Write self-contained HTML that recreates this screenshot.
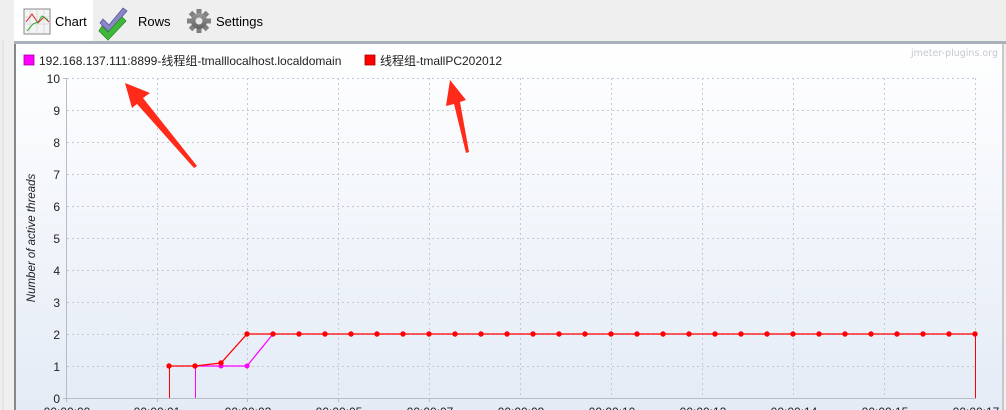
<!DOCTYPE html>
<html><head><meta charset="utf-8"><style>
html,body{margin:0;padding:0;width:1006px;height:410px;overflow:hidden;background:#efefef;font-family:"Liberation Sans","Noto Sans CJK SC",sans-serif;}
</style></head><body>
<svg width="1006" height="410" xmlns="http://www.w3.org/2000/svg" style="position:absolute;left:0;top:0" font-family="Liberation Sans, Noto Sans CJK SC, sans-serif">
<defs>
<linearGradient id="bg" x1="0" y1="0" x2="0" y2="1">
<stop offset="0" stop-color="#ffffff"/><stop offset="1" stop-color="#e4ebf6"/></linearGradient>
<linearGradient id="gr" x1="0" y1="0" x2="0" y2="1"><stop offset="0" stop-color="#9a9a9a"/><stop offset="1" stop-color="#606060"/></linearGradient>
</defs>
<rect x="0" y="0" width="1006" height="410" fill="#efefef"/>
<line x1="3" y1="40" x2="3" y2="410" stroke="#d8d8d8"/>
<rect x="14" y="0" width="79" height="41" fill="#ffffff"/>
<rect x="14" y="41" width="992" height="3" fill="#a9b1bb"/>
<rect x="24" y="9" width="26" height="25" fill="#f4f4f4" stroke="#888"/>
<g stroke="#ddd" stroke-width="1"><line x1="30" y1="10" x2="30" y2="33"/><line x1="37" y1="10" x2="37" y2="33"/><line x1="44" y1="10" x2="44" y2="33"/><line x1="25" y1="17" x2="49" y2="17"/><line x1="25" y1="24" x2="49" y2="24"/></g>
<polyline points="26,22 32,14 38,23 44,17 49,22" fill="none" stroke="#d22" stroke-width="1"/>
<polyline points="27,31 33,24 38,22 42,16 48,20" fill="none" stroke="#3a3" stroke-width="1"/>
<text x="55" y="26" font-size="13" fill="#000">Chart</text>
<path d="M103,19 l6,6 l14,-17 l4,3 l-18,21 l-9,-9z" fill="#8a86c8" stroke="#5a56a0" stroke-width="0.8"/>
<path d="M102,26 l6,6 l14,-15 l4,4 l-18,19 l-9,-9z" fill="#3fb83a" stroke="#2a8a28" stroke-width="0.8"/>
<text x="138" y="26" font-size="13" fill="#000">Rows</text>
<g transform="translate(199,21)">
<g fill="#808080"><rect x="-2.5" y="-12" width="5" height="24"/><rect x="-12" y="-2.5" width="24" height="5"/><rect x="-2.5" y="-12" width="5" height="24" transform="rotate(45)"/><rect x="-2.5" y="-12" width="5" height="24" transform="rotate(-45)"/></g>
<circle r="8" fill="url(#gr)"/><circle r="3.5" fill="#e8e8e8"/></g>
<text x="216" y="26" font-size="13" fill="#000">Settings</text>
<rect x="15" y="44" width="989" height="366" fill="url(#bg)"/>
<rect x="14" y="44" width="2" height="366" fill="#888"/>
<rect x="1002" y="44" width="2" height="366" fill="#c8c8c8"/>
<text x="998" y="56" font-size="9.5" fill="#c4c8ce" text-anchor="end" font-family="DejaVu Sans, sans-serif">jmeter-plugins.org</text>
<rect x="24" y="55" width="10" height="10" fill="#ff00ff" stroke="#a000a0" stroke-width="0.8"/>
<text x="39" y="65" font-size="12" fill="#222">192.168.137.111:8899-线程组-tmalllocalhost.localdomain</text>
<rect x="365" y="55" width="10" height="10" fill="#ff0000" stroke="#a00" stroke-width="0.8"/>
<text x="380" y="65" font-size="12" fill="#222">线程组-tmallPC202012</text>
<g stroke="#c4c8d0" stroke-dasharray="2,3" stroke-width="1">
<line x1="67" y1="78.5" x2="976" y2="78.5"/><line x1="67" y1="110.5" x2="976" y2="110.5"/><line x1="67" y1="142.5" x2="976" y2="142.5"/><line x1="67" y1="174.5" x2="976" y2="174.5"/><line x1="67" y1="206.5" x2="976" y2="206.5"/><line x1="67" y1="238.5" x2="976" y2="238.5"/><line x1="67" y1="270.5" x2="976" y2="270.5"/><line x1="67" y1="302.5" x2="976" y2="302.5"/><line x1="67" y1="334.5" x2="976" y2="334.5"/><line x1="67" y1="366.5" x2="976" y2="366.5"/>
<line x1="157.5" y1="78" x2="157.5" y2="398"/><line x1="247.5" y1="78" x2="247.5" y2="398"/><line x1="338.5" y1="78" x2="338.5" y2="398"/><line x1="429.5" y1="78" x2="429.5" y2="398"/><line x1="520.5" y1="78" x2="520.5" y2="398"/><line x1="611.5" y1="78" x2="611.5" y2="398"/><line x1="702.5" y1="78" x2="702.5" y2="398"/><line x1="793.5" y1="78" x2="793.5" y2="398"/><line x1="884.5" y1="78" x2="884.5" y2="398"/><line x1="975.5" y1="78" x2="975.5" y2="398"/>
</g>
<line x1="66.5" y1="78" x2="66.5" y2="402" stroke="#b8bcc4"/>
<line x1="63" y1="398.5" x2="976" y2="398.5" stroke="#b8bcc4"/>
<g stroke="#b8bcc4"><line x1="63" y1="78.5" x2="67" y2="78.5"/><line x1="157.5" y1="398" x2="157.5" y2="402"/><line x1="247.5" y1="398" x2="247.5" y2="402"/><line x1="338.5" y1="398" x2="338.5" y2="402"/><line x1="429.5" y1="398" x2="429.5" y2="402"/></g>
<g font-size="12" fill="#222" text-anchor="end">
<text x="60" y="83">10</text><text x="60" y="115">9</text><text x="60" y="147">8</text><text x="60" y="179">7</text><text x="60" y="211">6</text><text x="60" y="243">5</text><text x="60" y="275">4</text><text x="60" y="307">3</text><text x="60" y="339">2</text><text x="60" y="371">1</text><text x="60" y="403">0</text>
</g>
<text transform="translate(35,238) rotate(-90)" font-size="11.5" font-style="italic" fill="#222" text-anchor="middle">Number of active threads</text>
<g font-size="12" fill="#222" text-anchor="middle">
<text x="67" y="416">00:00:00</text><text x="157" y="416">00:00:01</text><text x="248" y="416">00:00:03</text><text x="339" y="416">00:00:05</text><text x="430" y="416">00:00:07</text><text x="521" y="416">00:00:09</text><text x="612" y="416">00:00:10</text><text x="703" y="416">00:00:12</text><text x="794" y="416">00:00:14</text><text x="885" y="416">00:00:15</text><text x="976" y="416">00:00:17</text>
</g>
<line x1="169.5" y1="366" x2="169.5" y2="398" stroke="#ff0000"/>
<line x1="195.5" y1="366" x2="195.5" y2="398" stroke="#ff00ff"/>
<polyline points="195,366 221,366 247,366 273,334" fill="none" stroke="#ff00ff" stroke-width="1.2"/>
<g fill="#ff00ff"><circle cx="221" cy="366" r="2.5"/><circle cx="247" cy="366" r="2.5"/></g>
<polyline points="169,366 195,366 221,363 247,334 976,334" fill="none" stroke="#ff0000" stroke-width="1.3"/>
<line x1="975.5" y1="334" x2="975.5" y2="398" stroke="#ff0000"/>
<g fill="#ff0000">
<circle cx="169" cy="366" r="2.7"/><circle cx="195" cy="366" r="2.7"/><circle cx="221" cy="363" r="2.7"/>
<circle cx="247" cy="334" r="2.7"/><circle cx="273" cy="334" r="2.7"/><circle cx="299" cy="334" r="2.7"/><circle cx="325" cy="334" r="2.7"/><circle cx="351" cy="334" r="2.7"/><circle cx="377" cy="334" r="2.7"/><circle cx="403" cy="334" r="2.7"/><circle cx="429" cy="334" r="2.7"/><circle cx="455" cy="334" r="2.7"/><circle cx="481" cy="334" r="2.7"/><circle cx="507" cy="334" r="2.7"/><circle cx="533" cy="334" r="2.7"/><circle cx="559" cy="334" r="2.7"/><circle cx="585" cy="334" r="2.7"/><circle cx="611" cy="334" r="2.7"/><circle cx="637" cy="334" r="2.7"/><circle cx="663" cy="334" r="2.7"/><circle cx="689" cy="334" r="2.7"/><circle cx="715" cy="334" r="2.7"/><circle cx="741" cy="334" r="2.7"/><circle cx="767" cy="334" r="2.7"/><circle cx="793" cy="334" r="2.7"/><circle cx="819" cy="334" r="2.7"/><circle cx="845" cy="334" r="2.7"/><circle cx="871" cy="334" r="2.7"/><circle cx="897" cy="334" r="2.7"/><circle cx="923" cy="334" r="2.7"/><circle cx="949" cy="334" r="2.7"/><circle cx="975" cy="334" r="2.7"/>
</g>
<path d="M125,83 L150,93 L143,98 L197,166 L194,168 L137,104 L132,108 Z" fill="#ff2a1a"/>
<path d="M450,80 L466,100 L460,102 L469,152 L466,153 L454,104 L446,106 Z" fill="#ff2a1a"/>
</svg>
</body></html>
